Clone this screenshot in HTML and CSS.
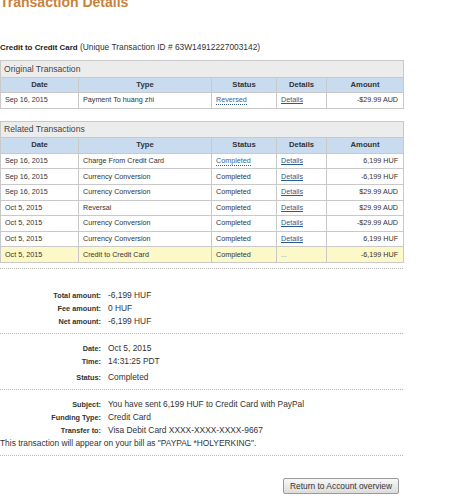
FILE: index.html
```html
<!DOCTYPE html>
<html>

<head>
	<meta charset="UTF-8">
	<link rel="stylesheet" href="styles.css">
</head>

<body>
	<div class="page">
		<h1 class="page-title">Transaction Details</h1>

		<div class="txn-heading"><b>Credit to Credit Card</b> (Unique Transaction ID # 63W14912227003142)</div>

		<!-- 原始交易 -->
		<table class="txn-table">
			<colgroup>
				<col style="width: 78px">
				<col style="width: 133px">
				<col style="width: 65px">
				<col style="width: 50px">
				<col style="width: 77px">
			</colgroup>
			<tr class="caption-row">
				<th colspan="5" class="table-caption">Original Transaction</th>
			</tr>
			<tr>
				<th>Date</th>
				<th>Type</th>
				<th>Status</th>
				<th>Details</th>
				<th>Amount</th>
			</tr>
			<tr>
				<td>Sep 16, 2015</td>
				<td>Payment To huang zhi</td>
				<td><span class="status-tip">Reversed</span></td>
				<td><a href="#">Details</a></td>
				<td class="amount">-$29.99 AUD</td>
			</tr>
		</table>

		<!-- 相关交易 -->
		<table class="txn-table related">
			<colgroup>
				<col style="width: 78px">
				<col style="width: 133px">
				<col style="width: 65px">
				<col style="width: 50px">
				<col style="width: 77px">
			</colgroup>
			<tr class="caption-row">
				<th colspan="5" class="table-caption">Related Transactions</th>
			</tr>
			<tr>
				<th>Date</th>
				<th>Type</th>
				<th>Status</th>
				<th>Details</th>
				<th>Amount</th>
			</tr>
			<tr>
				<td>Sep 16, 2015</td>
				<td>Charge From Credit Card</td>
				<td><span class="status-tip">Completed</span></td>
				<td><a href="#">Details</a></td>
				<td class="amount">6,199 HUF</td>
			</tr>
			<tr>
				<td>Sep 16, 2015</td>
				<td>Currency Conversion</td>
				<td>Completed</td>
				<td><a href="#">Details</a></td>
				<td class="amount">-6,199 HUF</td>
			</tr>
			<tr>
				<td>Sep 16, 2015</td>
				<td>Currency Conversion</td>
				<td>Completed</td>
				<td><a href="#">Details</a></td>
				<td class="amount">$29.99 AUD</td>
			</tr>
			<tr>
				<td>Oct 5, 2015</td>
				<td>Reversal</td>
				<td>Completed</td>
				<td><a href="#">Details</a></td>
				<td class="amount">$29.99 AUD</td>
			</tr>
			<tr>
				<td>Oct 5, 2015</td>
				<td>Currency Conversion</td>
				<td>Completed</td>
				<td><a href="#">Details</a></td>
				<td class="amount">-$29.99 AUD</td>
			</tr>
			<tr>
				<td>Oct 5, 2015</td>
				<td>Currency Conversion</td>
				<td>Completed</td>
				<td><a href="#">Details</a></td>
				<td class="amount">6,199 HUF</td>
			</tr>
			<tr class="current-row">
				<td>Oct 5, 2015</td>
				<td>Credit to Credit Card</td>
				<td>Completed</td>
				<td class="muted">...</td>
				<td class="amount">-6,199 HUF</td>
			</tr>
		</table>

		<div class="divider"></div>

		<!-- 金额 -->
		<div class="info-block amounts">
			<div class="info-row"><span class="info-label">Total amount:</span><span class="info-value">-6,199 HUF</span></div>
			<div class="info-row"><span class="info-label">Fee amount:</span><span class="info-value">0 HUF</span></div>
			<div class="info-row"><span class="info-label">Net amount:</span><span class="info-value">-6,199 HUF</span></div>
		</div>

		<div class="divider"></div>

		<!-- 时间 -->
		<div class="info-block">
			<div class="info-row"><span class="info-label">Date:</span><span class="info-value">Oct 5, 2015</span></div>
			<div class="info-row"><span class="info-label">Time:</span><span class="info-value">14:31:25 PDT</span></div>
			<div class="info-row spaced"><span class="info-label">Status:</span><span class="info-value">Completed</span></div>
		</div>

		<div class="divider"></div>

		<!-- 说明 -->
		<div class="info-block">
			<div class="info-row"><span class="info-label">Subject:</span><span class="info-value">You have sent 6,199 HUF to Credit Card with PayPal</span></div>
			<div class="info-row"><span class="info-label">Funding Type:</span><span class="info-value">Credit Card</span></div>
			<div class="info-row"><span class="info-label">Transfer to:</span><span class="info-value">Visa Debit Card XXXX-XXXX-XXXX-9667</span></div>
			<div class="info-note">This transaction will appear on your bill as "PAYPAL *HOLYERKING".</div>
		</div>

		<div class="divider"></div>

		<div class="actions">
			<button class="return-btn">Return to Account overview</button>
		</div>
	</div>
</body>

</html>
```

FILE: styles.css
```css
		html,
		body {
			margin: 0;
			padding: 0;
			background: #ffffff;
			overflow: hidden;
		}

		body {
			font-family: "Liberation Sans", Arial, sans-serif;
			color: #333333;
		}

		.page {
			width: 403px;
		}

		/* 标题 */
		.page-title {
			margin: -6px 0 0;
			font-size: 14px;
			line-height: 16px;
			font-weight: bold;
			color: #c8823e;
		}

		.txn-heading {
			margin-top: 31px;
			font-size: 8.4px;
			line-height: 12px;
			color: #333;
		}

		.txn-heading b {
			font-size: 7.9px;
			color: #222;
		}

		/* 交易表格 */
		.txn-table {
			width: 403px;
			margin-top: 6px;
			border-collapse: collapse;
			border: 1px solid #c4c4c4;
			table-layout: fixed;
		}

		.txn-table.related {
			margin-top: 12px;
		}

		.txn-table tr {
			height: 15.6px;
		}

		.txn-table tr.caption-row {
			height: 16.5px;
		}

		.txn-table th,
		.txn-table td {
			border: 1px solid #c9c9c9;
			padding: 0 4px;
			line-height: 12px;
			white-space: nowrap;
		}

		.txn-table th {
			background: #c9dcef;
			font-size: 7.7px;
			font-weight: bold;
			color: #333;
			text-align: center;
		}

		.txn-table th.table-caption {
			background: #ececec;
			font-size: 8.6px;
			font-weight: normal;
			color: #444;
			text-align: left;
			padding-left: 3px;
		}

		.txn-table td {
			font-size: 7.2px;
			color: #333;
			background: #ffffff;
		}

		.txn-table td.amount {
			text-align: right;
			padding-right: 5px;
		}

		.txn-table td.muted {
			color: #888;
		}

		.txn-table .current-row td {
			background: #fdf8c8;
		}

		.txn-table a {
			color: #2b5c8e;
			text-decoration: underline;
		}

		.status-tip {
			color: #3a6290;
			border-bottom: 1px dotted #3a6290;
		}

		/* 分隔线 */
		.divider {
			margin-top: 5px;
			border-top: 1px dotted #b8b8b8;
		}

		/* 明细 */
		.info-block {
			padding: 8px 0 5px;
		}

		.info-block.amounts {
			padding-top: 20px;
		}

		.info-row {
			display: flex;
			align-items: baseline;
			line-height: 13px;
		}

		.info-row.spaced {
			margin-top: 3px;
		}

		.info-label {
			width: 101px;
			flex-shrink: 0;
			text-align: right;
			font-size: 7.3px;
			font-weight: bold;
			color: #333;
		}

		.info-value {
			margin-left: 7px;
			font-size: 8.4px;
			color: #333;
		}

		.info-note {
			font-size: 8.4px;
			line-height: 13px;
			color: #333;
		}

		.info-block + .divider {
			margin-top: 0;
		}

		/* 返回按钮 */
		.actions {
			display: flex;
			justify-content: flex-end;
			padding: 22px 4px 0 0;
		}

		.return-btn {
			height: 16px;
			padding: 0 6px;
			border: 1px solid #9a9a9a;
			border-radius: 2px;
			background: linear-gradient(#f8f8f8, #dcdcdc);
			font-family: "Liberation Sans", Arial, sans-serif;
			font-size: 8.4px;
			color: #333;
			cursor: pointer;
		}
```
